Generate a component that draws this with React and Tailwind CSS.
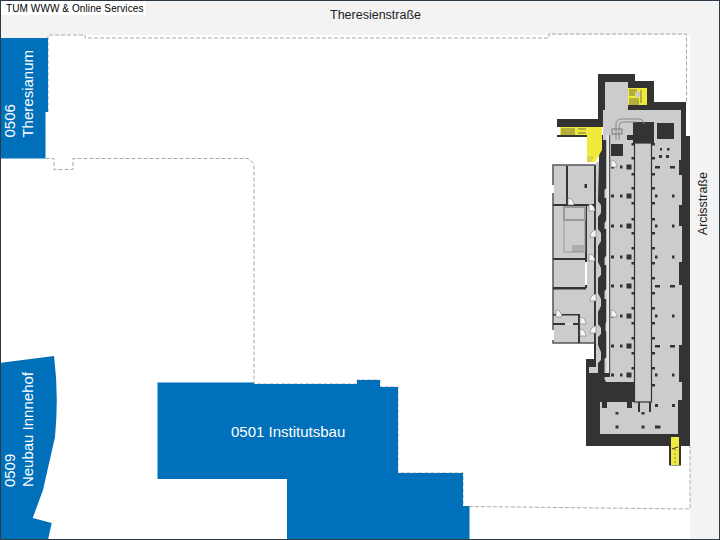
const WALL = "#333333";
const FLOOR = "#cccccc";
const BLUE = "#0070bb";
const YELLOW = "#f0ea3c";

const ROWS = [167, 196, 226, 257, 286, 316, 346, 375];
const NOTCHES = [144, 158, 174, 188, 203, 219, 233, 248, 263, 278, 293, 308, 323, 338, 353, 368, 385];
const DOORS = [
  [611, 160, 1], [589, 204, 1], [589, 254, 1], [596, 230, -1], [596, 326, -1],
  [611, 310, 1], [556, 310, 1], [580, 317, 1], [580, 329, 1], [568, 198, 1], [596, 294, -1],
];

function Dashed({ points }) {
  return <polyline points={points} fill="none" stroke="#aaaaaa" strokeWidth="1" strokeDasharray="4 2" />;
}

function Door({ x, y, flip }) {
  return (
    <path
      d={`M${x} ${y + 7}h${flip * 6}a6 7 0 0 ${flip > 0 ? 0 : 1} ${-flip * 6} -7z`}
      fill="#f4f4f4"
      stroke="#777777"
      strokeWidth="0.6"
    />
  );
}

function Building() {
  return (
    <g>
      {/* outer walls */}
      <polygon
        fill={WALL}
        points="598,74 635,74 635,81 654,81 654,102 686,102 686,136 690,136 690,446 586,446 586,359 594,359 594,166 603,160 603,127 557,127 557,119 598,119"
      />
      <rect x="557" y="135" width="30" height="2" fill={WALL} />

      {/* annex */}
      <rect x="553" y="165" width="42" height="178" fill={FLOOR} stroke="#555555" strokeWidth="1.5" />
      <g fill="#333333">
        <rect x="566" y="166" width="2" height="39" />
        <rect x="553" y="204" width="42" height="2" />
        <rect x="553" y="258" width="33" height="2" />
        <rect x="553" y="287" width="33" height="2.5" />
        <rect x="585" y="205" width="2" height="83" />
        <rect x="553" y="314" width="27" height="1.5" />
        <rect x="553" y="323" width="27" height="2" />
        <rect x="578" y="314" width="2" height="29" />
        <rect x="585" y="184" width="2" height="4" />
      </g>
      <rect x="585" y="262" width="2" height="23" fill="#ffffff" />
      <rect x="552" y="185" width="2" height="8" fill="#ffffff" />
      <rect x="552" y="330" width="2" height="10" fill="#ffffff" />
      <rect x="565" y="323" width="8" height="2" fill="#dddddd" />
      <rect x="564" y="207" width="21" height="45" fill="none" stroke="#999999" strokeWidth="1" />
      <rect x="564" y="207" width="21" height="13" fill="none" stroke="#999999" strokeWidth="2" />
      <g stroke="#555555" strokeWidth="0.5">
        <path d="M573 245v7M575 245v7M577 245v7M579 245v7M581 245v7M583 245v7" />
      </g>

      {/* main floor */}
      <polygon
        fill={FLOOR}
        points="605,82 628,82 628,110 681,110 681,160 679,160 679,175 682,175 682,205 679,205 679,226 682,226 682,262 679,262 679,285 682,285 682,345 679,345 679,382 682,382 682,400 678,400 678,434 600,434 600,402 636,402 636,383 600,383 600,377 610,377 610,373 589,373 589,367 596,367 596,162 603,162 603,110 605,110"
      />

      {/* stair wall zigzag */}
      <path
        fill={WALL}
        d="M599.500 140h7v48l-2 2v8h2v22l-2 3v6h2v26l-2 3v7h2v24l-2 2v8h2v22l-1 3v6l1 3v24l-2 2v20l2 4h-7.500l-1-4v-16l3-3v-8l-3-7v-8l3 -3v-6l-3-4v-12l3-6v-7l-3-6v-15l3-3v-7l-3-6v-16l3-5v-8l-3-4v-12l3-4v-8l-3-4z"
      />
      <rect x="594" y="166" width="1.500" height="195" fill={WALL} />
      <rect x="606.500" y="135" width="2.500" height="238" fill="#e8e8e8" />
      <rect x="609" y="135" width="1.200" height="238" fill="#555555" />
      <rect x="586" y="382" width="48" height="20" fill={WALL} />

      {/* centre strip */}
      <rect x="634.500" y="143" width="17" height="259" fill={FLOOR} stroke={WALL} strokeWidth="1.200" />
      <rect x="633" y="122" width="21" height="21" fill={WALL} />
      <rect x="627" y="135" width="6" height="5" fill={WALL} />
      <rect x="657" y="123" width="17" height="16" fill={WALL} />
      <rect x="611" y="144" width="12" height="12" fill={WALL} />
      <rect x="597" y="135" width="6" height="7" fill={WALL} />
      {NOTCHES.map((y) => (
        <g key={y} fill={WALL}>
          <rect x="631.500" y={y - 1} width="3" height="2.500" />
          <rect x="652" y={y - 1} width="3" height="2.500" />
        </g>
      ))}

      {/* columns */}
      {ROWS.map((y, i) => (
        <g key={y} fill={WALL}>
          <rect x="611" y={y - 1.500} width="3" height="3" />
          <rect x="620" y={y - 1.500} width="2.500" height="3" />
          <rect x="626.500" y={y - 2.500} width="5" height="5" />
          {i === 0 || i === 4 || i === 6 ? (
            <>
              <rect x="655" y={y - 1} width="5" height="2.500" />
              <rect x="670" y={y - 1} width="5" height="2.500" />
            </>
          ) : (
            <>
              <rect x="655" y={y - 1.500} width="2.500" height="3" />
              <rect x="672" y={y - 1.500} width="2.500" height="3" />
            </>
          )}
        </g>
      ))}
      <g fill={WALL}>
        <rect x="660" y="148" width="2" height="2.500" />
        <rect x="667" y="148" width="2.500" height="2.500" />
        <rect x="659" y="155" width="3" height="3" />
        <rect x="666" y="155" width="3" height="3" />
        <rect x="584.500" y="184" width="2" height="4" />
        <rect x="655" y="404" width="3" height="3" />
        <rect x="672" y="404" width="3" height="3" />
        <rect x="615.500" y="412" width="3" height="2.500" />
        <rect x="641.500" y="412" width="3" height="2.500" />
        <rect x="615.500" y="425.500" width="3" height="3" />
        <rect x="641.500" y="425.500" width="3" height="3" />
        <rect x="655" y="425.500" width="5.500" height="3" />
        <rect x="602" y="402" width="5" height="6" />
        <rect x="627" y="402" width="5" height="6" />
        <rect x="638" y="402" width="2" height="10" />
        <rect x="649" y="402" width="2" height="10" />
      </g>

      {/* ducts */}
      <path
        d="M616 140v-16a5 5 0 0 1 5 -5h18a5 5 0 0 1 5 5M619 140v-14a4 4 0 0 1 4 -4h14"
        fill="none"
        stroke="#888888"
        strokeWidth="1"
      />
      <rect x="612" y="129" width="10" height="5" fill="none" stroke="#777777" strokeWidth="1" />

      {/* yellow areas */}
      <polygon fill={YELLOW} points="560,127 602,127 602,150 595,162 587,162 587,135 560,135" />
      <g stroke="#444444" strokeWidth="0.7">
        <path d="M562 128v7M564 128v7M566 128v7M568 128v7M570 128v7M572 128v7M574 128v7" />
        <path d="M578 129h8M578 133h8" />
      </g>
      <path d="M587 157a7 7 0 0 1 7 0l-3 5h-4z" fill="#d9d24c" />
      <rect x="628" y="88" width="19" height="17" fill={YELLOW} />
      <rect x="636" y="92" width="4" height="5" fill={FLOOR} />
      <g stroke="#444444" strokeWidth="0.7">
        <path d="M630 89v7M632 89v7M634 89v7M636 89v3M630 98v7M632 98v7M634 98v7M636 98v7M638 98v7" />
        <path d="M641 90v13" />
      </g>
      <rect x="669" y="446" width="12" height="19.500" fill={WALL} />
      <rect x="671" y="437" width="8" height="28" fill={YELLOW} />
      <path d="M672 449l6-2" stroke="#333333" strokeWidth="1" />
      <path d="M675 449v15" stroke="#777777" strokeWidth="0.8" strokeDasharray="2 2" />

      {DOORS.map(([x, y, f]) => (
        <Door key={`${x}-${y}`} x={x} y={y} flip={f} />
      ))}
    </g>
  );
}

function MapDrawing() {
  return (
    <svg width="720" height="540" viewBox="0 0 720 540" className="block">
      <rect width="720" height="540" fill="#ffffff" />
      <polygon fill="#f3f3f3" points="0,0 720,0 720,540 690,540 690,35 48,35 48,38 0,38" />

      <Dashed points="48,112 48,35 85,35 85,38 549,38 549,34 686.500,34 686.500,104" />
      <Dashed points="45.500,158.500 54,158.500 54,169.500 73,169.500 73,158.500 248,158.500 254,164 254,384 357,384 357,380 380,380 380,387 398,387 398,473 463,473 463,506.500 470,506.500 690,509 690,446" />

      <polygon fill={BLUE} points="1,38 48,38 48,112 45.500,112 45.500,158.500 1,158.500" />
      <path fill={BLUE} d="M1 362.700L54 356Q59 395 55 437L43 490L32.700 518L51.700 523L48 540H1z" />
      <polygon
        fill={BLUE}
        points="157.500,382.500 254,382.500 254,384 357,384 357,380 380,380 380,387 398,387 398,473 463,473 463,506 469.500,506 469.500,540 287,540 287,479 157.500,479"
      />

      <Building />
    </svg>
  );
}

export default function App() {
  return (
    <div className="relative w-[720px] h-[540px] overflow-hidden bg-white font-['Liberation_Sans',Arial,sans-serif]">
      <MapDrawing />

      <div className="absolute left-[1px] top-[1px] h-[14px] w-[145px] bg-white pl-[5px] text-[10px] leading-[15px] tracking-[0.1px] whitespace-nowrap text-black">
        TUM WWW &amp; Online Services
      </div>

      <div className="absolute left-[330px] top-[8px] text-[12.5px] leading-[14px] whitespace-nowrap text-[#222222]">
        Theresienstraße
      </div>
      <div className="absolute left-[696px] top-[172px] [writing-mode:vertical-rl] rotate-180 text-[12.5px] leading-[14px] whitespace-nowrap text-[#222222]">
        Arcisstraße
      </div>

      <div className="absolute left-[1px] top-[50px] [writing-mode:vertical-rl] rotate-180 text-[15px] leading-[18px] whitespace-nowrap text-white">
        <div>0506</div>
        <div>Theresianum</div>
      </div>
      <div className="absolute left-[1px] top-[372px] [writing-mode:vertical-rl] rotate-180 text-[15px] leading-[18px] whitespace-nowrap text-white">
        <div>0509</div>
        <div>Neubau Innnehof</div>
      </div>
      <div className="absolute left-[231px] top-[423px] text-[15px] leading-[17px] whitespace-nowrap text-white">
        0501 Institutsbau
      </div>

      <div className="pointer-events-none absolute inset-0 border border-[#2e3b47]" />
    </div>
  );
}
